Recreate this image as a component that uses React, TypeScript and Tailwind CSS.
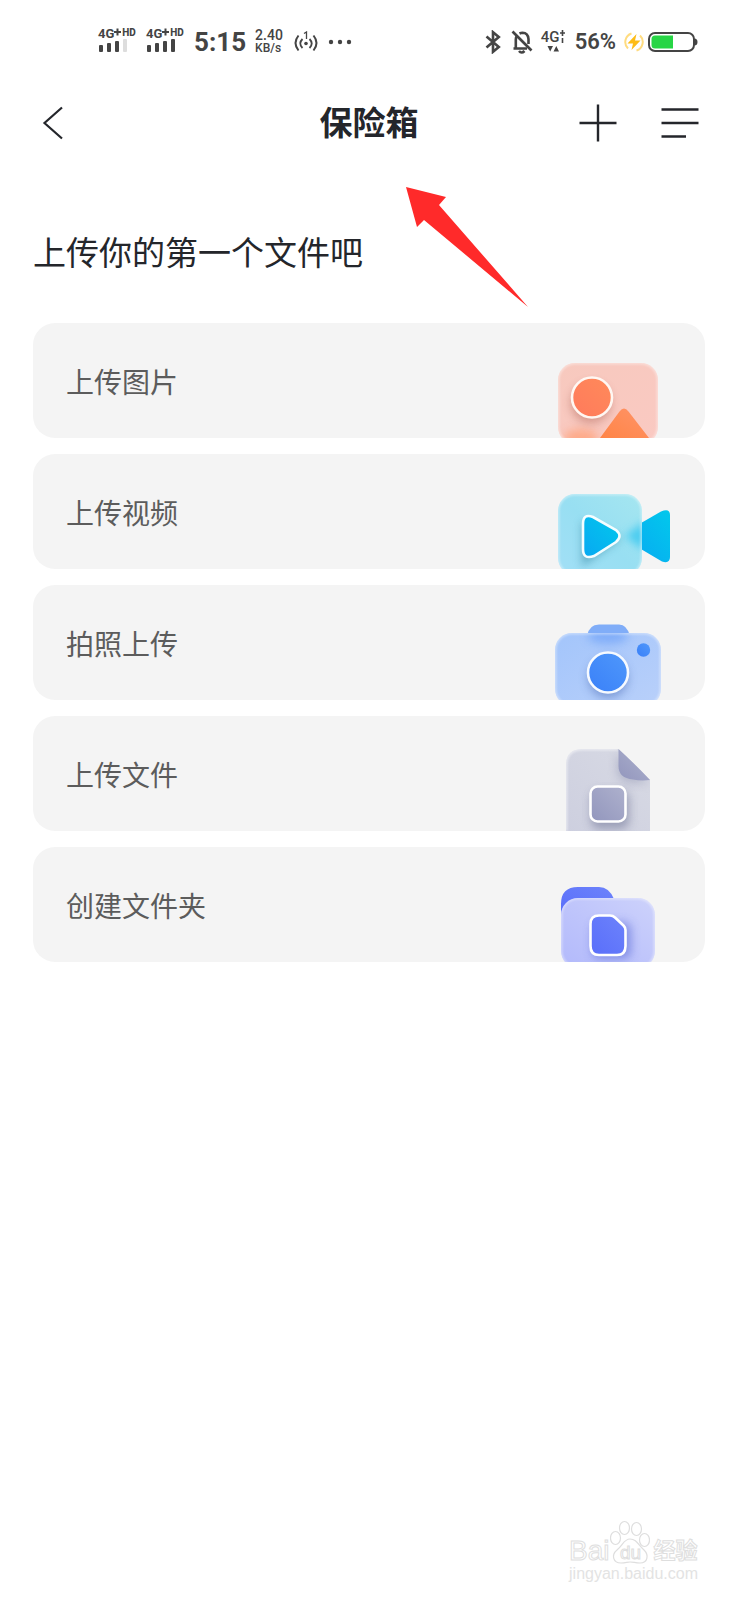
import React from 'react';

interface UploadAction {
  label: string;
  icon: React.FC;
}

const SignalBars: React.FC<{ level: number }> = ({ level }) => {
  const heights = [7, 9, 11, 13];
  return (
    <div className="w-[39px] pb-1.5">
      <div className="flex h-3 items-start leading-none font-bold">
        <span className="text-[13px] leading-[13px]">4G</span>
        <svg className="h-[11px] w-[7px] shrink-0" viewBox="0 0 7 11" aria-hidden="true">
          <path d="M3.500 1.500v7M0 5h7" stroke="currentColor" strokeWidth="2" />
        </svg>
        <span className="pl-px text-[10px] leading-[11px] font-extrabold">HD</span>
      </div>
      <svg className="h-[13px] w-[30px]" viewBox="0 0 30 13" aria-hidden="true">
        {heights.map((h, i) => (
          <rect
            key={h}
            x={1 + i * 8}
            y={13 - h}
            width="4"
            height={h}
            rx="1"
            fill={i < level ? '#444444' : '#dddddd'}
          />
        ))}
      </svg>
    </div>
  );
};

const StatusBar: React.FC = () => (
  <div className="flex h-[84px] items-center justify-between pr-10 pl-[98px] font-['Roboto',sans-serif] text-[#444444]">
    <div className="flex items-center gap-[9px]">
      <SignalBars level={3} />
      <SignalBars level={4} />
      <span className="text-[26px] leading-none font-bold">5:15</span>
      <div className="text-[14px] leading-[13px] font-medium">
        <div>2.40</div>
        <div className="text-[12px]">KB/s</div>
      </div>
      <svg className="ml-0.5 h-[22px] w-[24px]" viewBox="0 0 24 22" fill="none" stroke="currentColor" aria-hidden="true">
        <path d="M4.500 4.500Q-1.500 12 4.500 19.500M19.500 4.500Q25.500 12 19.500 19.500" strokeWidth="2" />
        <path d="M8.500 8Q4 12.500 8.500 17M15.500 8Q20 12.500 15.500 17" strokeWidth="1.800" />
        <path d="M10 2.500L12.500 1V8" strokeWidth="1.300" />
        <circle cx="12" cy="12.500" r="1.800" fill="currentColor" stroke="none" />
      </svg>
      <svg className="h-[6px] w-[26px]" viewBox="0 0 26 6" fill="currentColor" aria-hidden="true">
        <circle cx="4" cy="3" r="2.200" />
        <circle cx="13" cy="3" r="2.200" />
        <circle cx="22" cy="3" r="2.200" />
      </svg>
    </div>

    <div className="flex items-center gap-2">
      <svg className="mr-0.5 h-6 w-4" viewBox="0 0 16 24" fill="none" stroke="currentColor" strokeWidth="2.600" aria-hidden="true">
        <path d="M1.500 6.500L13.800 17 8 21.800V2.200L13.800 7 1.500 17.500" />
      </svg>
      <svg className="h-6 w-[22px]" viewBox="0 0 22 24" fill="none" stroke="currentColor" strokeWidth="2.600" aria-hidden="true">
        <path d="M2.500 18.500H16M4.800 18.500V9.500Q4.800 7.500 5.800 6M8.500 3.500Q10 2.800 11.500 2.800 17 3 17.500 9V14" />
        <path d="M1.500 1.500L20.500 20.500" />
        <path d="M8 21Q10.500 24 13.500 21" />
      </svg>
      <div className="w-[26px] pb-0.5">
        <div className="flex h-[15px] items-start">
          <span className="text-[15px] leading-[15px] font-medium">4G</span>
          <svg className="h-[14px] w-[6px] shrink-0" viewBox="0 0 6 14" fill="none" stroke="currentColor" strokeWidth="1.600" aria-hidden="true">
            <path d="M3.500 0V6M1 3H6M3.500 8V13" />
          </svg>
        </div>
        <svg className="ml-[6px] h-[7px] w-[13px]" viewBox="0 0 13 7" fill="currentColor" aria-hidden="true">
          <path d="M.500 1H6L3.200 6.500ZM6.500 6.500H12L9.300 1Z" />
        </svg>
      </div>
      <span className="text-[22px] leading-none font-semibold">56%</span>
      <svg className="h-5 w-5" viewBox="0 0 20 20" fill="none" aria-hidden="true">
        <path d="M7.500 1.500A9 9 0 0 0 4 16.500M12.500 18.500A9 9 0 0 0 16 3.500" stroke="#ffdc80" strokeWidth="2" />
        <path d="M12.500 2L3.500 11.500H9L7.500 18 16.500 8.500H11Z" fill="#fdbc16" />
      </svg>
      <svg className="-ml-1 h-5 w-[50px]" viewBox="0 0 50 20" fill="none" aria-hidden="true">
        <rect x="1" y="1" width="45" height="18" rx="6" stroke="#444444" strokeWidth="2" />
        <path d="M7 3.500H25V16.500H7Q3.500 16.500 3.500 13V7Q3.500 3.500 7 3.500Z" fill="#27d545" />
        <path d="M47 6.500Q49.500 7 49.500 10T47 13.500Z" fill="#444444" />
      </svg>
    </div>
  </div>
);

const ImageIcon: React.FC = () => (
  <svg className="h-[88px] w-32" viewBox="0 0 128 88" fill="none" aria-hidden="true">
    <defs>
      <linearGradient id="img-body" x1="0" y1="0" x2="1" y2="1">
        <stop stopColor="#f7c9be" />
        <stop offset="1" stopColor="#fac9c2" />
      </linearGradient>
      <linearGradient id="img-sun" x1="1" y1="0" x2="0" y2="1">
        <stop stopColor="#ff8a5a" />
        <stop offset="1" stopColor="#ff7a5c" />
      </linearGradient>
      <linearGradient id="img-hill" x1="0" y1="1" x2="1" y2="0">
        <stop stopColor="#ff8446" />
        <stop offset="1" stopColor="#ff9468" />
      </linearGradient>
      <clipPath id="img-clip">
        <rect x="13" y="13" width="100" height="81" rx="17" />
      </clipPath>
      <filter id="img-blur" x="-50%" y="-50%" width="200%" height="200%">
        <feGaussianBlur stdDeviation="5" />
      </filter>
      <filter id="img-edge">
        <feGaussianBlur stdDeviation="1" />
      </filter>
    </defs>
    <g clipPath="url(#img-clip)">
      <rect x="13" y="13" width="100" height="81" fill="url(#img-body)" />
      <ellipse cx="36" cy="88" rx="17" ry="9" fill="#ffa27a" opacity=".8" filter="url(#img-blur)" />
      <circle cx="46" cy="53" r="20" fill="#a85a4c" opacity=".45" filter="url(#img-blur)" />
      <rect x="13" y="13" width="100" height="81" rx="17" stroke="#ffffff" strokeWidth="3" opacity=".4" filter="url(#img-edge)" />
    </g>
    <path d="M55 88L74.500 61.500Q79 55.500 83.500 61.500L104 88Z" fill="url(#img-hill)" />
    <circle cx="47" cy="47.500" r="20" fill="url(#img-sun)" stroke="#fff7f2" strokeWidth="2.600" />
  </svg>
);

const VideoIcon: React.FC = () => (
  <svg className="h-[88px] w-32" viewBox="0 0 128 88" fill="none" aria-hidden="true">
    <defs>
      <linearGradient id="vid-body" x1="1" y1="0" x2="0" y2="1">
        <stop stopColor="#a5e6f0" />
        <stop offset=".5" stopColor="#98dff2" />
        <stop offset="1" stopColor="#a2dff6" />
      </linearGradient>
      <linearGradient id="vid-play" x1="1" y1="0" x2="0" y2="1">
        <stop stopColor="#02c8ec" />
        <stop offset="1" stopColor="#08a8f2" />
      </linearGradient>
      <clipPath id="vid-clip">
        <rect x="13" y="13" width="84" height="81" rx="17" />
      </clipPath>
      <filter id="vid-blur" x="-50%" y="-50%" width="200%" height="200%">
        <feGaussianBlur stdDeviation="4" />
      </filter>
      <filter id="vid-edge">
        <feGaussianBlur stdDeviation="1" />
      </filter>
    </defs>
    <path d="M84 49L116 30.500Q125 27 125 34V76Q125 83 117 80.500L84 61Z" fill="url(#vid-play)" />
    <g clipPath="url(#vid-clip)">
      <rect x="13" y="13" width="84" height="81" fill="url(#vid-body)" />
      <path d="M80 55L100 40V70Z" fill="#4accf0" filter="url(#vid-blur)" />
      <path d="M40 45L70 58 40 80Z" fill="#2c7f9b" stroke="#2c7f9b" strokeWidth="6" opacity=".5" filter="url(#vid-blur)" />
      <rect x="13" y="13" width="84" height="81" rx="17" stroke="#ffffff" strokeWidth="3" opacity=".4" filter="url(#vid-edge)" />
    </g>
    <path
      d="M38 43Q38 32 48 36L71 49Q78 55 71 61L49 75Q38 79 38 68Z"
      fill="url(#vid-play)"
      stroke="#f4fdff"
      strokeWidth="2.600"
    />
  </svg>
);

const CameraIcon: React.FC = () => (
  <svg className="h-[88px] w-32" viewBox="0 0 128 88" fill="none" aria-hidden="true">
    <defs>
      <linearGradient id="cam-body" x1="0" y1="0" x2="1" y2="1">
        <stop stopColor="#a3c5fb" />
        <stop offset="1" stopColor="#b9d0fa" />
      </linearGradient>
      <linearGradient id="cam-lens" x1="1" y1="0" x2="0" y2="1">
        <stop stopColor="#4f98fb" />
        <stop offset="1" stopColor="#3a80f8" />
      </linearGradient>
      <clipPath id="cam-clip">
        <rect x="10" y="21" width="106" height="73" rx="17" />
      </clipPath>
      <filter id="cam-blur" x="-50%" y="-50%" width="200%" height="200%">
        <feGaussianBlur stdDeviation="5" />
      </filter>
      <filter id="cam-edge">
        <feGaussianBlur stdDeviation="1" />
      </filter>
    </defs>
    <path d="M42 24Q44 12.500 54 12.500H74Q82 12.500 85 24Z" fill="#80adf8" />
    <g clipPath="url(#cam-clip)">
      <rect x="10" y="21" width="106" height="73" fill="url(#cam-body)" />
      <ellipse cx="63" cy="24" rx="20" ry="8" fill="#6fa2f8" opacity=".7" filter="url(#cam-blur)" />
      <circle cx="63" cy="66" r="20" fill="#4a6bb4" opacity=".5" filter="url(#cam-blur)" />
      <rect x="10" y="21" width="106" height="73" rx="17" stroke="#ffffff" strokeWidth="3" opacity=".4" filter="url(#cam-edge)" />
    </g>
    <circle cx="63" cy="60.500" r="20" fill="url(#cam-lens)" stroke="#f6faff" strokeWidth="2.600" />
    <circle cx="98.500" cy="38" r="6.700" fill="url(#cam-lens)" />
  </svg>
);

const FileIcon: React.FC = () => (
  <svg className="h-[88px] w-32" viewBox="0 0 128 88" fill="none" aria-hidden="true">
    <defs>
      <linearGradient id="file-body" x1="1" y1="0" x2="0" y2="1">
        <stop stopColor="#d8dae4" />
        <stop offset="1" stopColor="#cdcfdf" />
      </linearGradient>
      <linearGradient id="file-mark" x1="1" y1="0" x2="0" y2="1">
        <stop stopColor="#aeb1cd" />
        <stop offset="1" stopColor="#9296bd" />
      </linearGradient>
      <clipPath id="file-clip">
        <path d="M21 22Q21 6 38 6H73.500L105 37V88H21Z" />
      </clipPath>
      <filter id="file-blur" x="-50%" y="-50%" width="200%" height="200%">
        <feGaussianBlur stdDeviation="5" />
      </filter>
      <filter id="file-edge">
        <feGaussianBlur stdDeviation="1" />
      </filter>
    </defs>
    <g clipPath="url(#file-clip)">
      <rect x="21" y="6" width="84" height="82" fill="url(#file-body)" />
      <path d="M72 10V28Q74 40 86 40H104Z" fill="#9296b4" opacity=".5" filter="url(#file-blur)" />
      <rect x="46" y="48" width="38" height="38" rx="8" fill="#777b9b" opacity=".6" filter="url(#file-blur)" />
      <path d="M21 88V22Q21 6 38 6H73" stroke="#ffffff" strokeWidth="3" opacity=".5" filter="url(#file-edge)" />
    </g>
    <path d="M73.500 6Q90 21 105 37 96 38 88 36.500 73.500 35 73.500 23Z" fill="url(#file-mark)" />
    <rect x="45.500" y="43.500" width="35" height="35" rx="7" fill="url(#file-mark)" stroke="#ffffff" strokeWidth="2.600" />
  </svg>
);

const FolderIcon: React.FC = () => (
  <svg className="h-[88px] w-32" viewBox="0 0 128 88" fill="none" aria-hidden="true">
    <defs>
      <linearGradient id="dir-body" x1="1" y1="0" x2="0" y2="1">
        <stop stopColor="#cdd2fb" />
        <stop offset=".5" stopColor="#bfc5fb" />
        <stop offset="1" stopColor="#b2b9fb" />
      </linearGradient>
      <linearGradient id="dir-mark" x1="1" y1="0" x2="0" y2="1">
        <stop stopColor="#6d83fb" />
        <stop offset="1" stopColor="#596efa" />
      </linearGradient>
      <clipPath id="dir-clip">
        <rect x="16" y="24" width="94" height="70" rx="17" />
      </clipPath>
      <filter id="dir-blur" x="-50%" y="-50%" width="200%" height="200%">
        <feGaussianBlur stdDeviation="5" />
      </filter>
      <filter id="dir-edge">
        <feGaussianBlur stdDeviation="1" />
      </filter>
    </defs>
    <path d="M16 42V30Q16 13 33 13H54Q64 13 69 25L40 34Z" fill="url(#dir-mark)" />
    <g clipPath="url(#dir-clip)">
      <rect x="16" y="24" width="94" height="70" fill="url(#dir-body)" />
      <rect x="47" y="48" width="39" height="37" rx="8" fill="#4a5cd0" opacity=".5" filter="url(#dir-blur)" />
      <rect x="16" y="24" width="94" height="70" rx="17" stroke="#ffffff" strokeWidth="3" opacity=".4" filter="url(#dir-edge)" />
    </g>
    <path
      d="M54 41.500H65Q68 41.500 70 43.500L78.500 51.500Q80.500 53.500 80.500 56V72Q80.500 81 72 81H54Q45.500 81 45.500 72V50Q45.500 41.500 54 41.500Z"
      fill="url(#dir-mark)"
      stroke="#ffffff"
      strokeWidth="2.600"
    />
  </svg>
);

const actions: UploadAction[] = [
  { label: '上传图片', icon: ImageIcon },
  { label: '上传视频', icon: VideoIcon },
  { label: '拍照上传', icon: CameraIcon },
  { label: '上传文件', icon: FileIcon },
  { label: '创建文件夹', icon: FolderIcon }
];

const Header: React.FC = () => (
  <header className="grid h-[78px] grid-cols-[1fr_auto_1fr] items-center px-[38px]">
    <button type="button" aria-label="返回" className="size-10">
      <svg className="size-10" viewBox="0 0 40 40" fill="none" stroke="#24262b" strokeWidth="2.200">
        <path d="M24 4.500L6.500 20L24 35.500" />
      </svg>
    </button>
    <h1 className="pb-1 text-[33px] leading-10 font-bold">保险箱</h1>
    <div className="flex justify-end gap-[42px]">
      <button type="button" aria-label="新建">
        <svg className="size-10" viewBox="0 0 40 40" fill="none" stroke="#24262b" strokeWidth="2.400">
          <path d="M1.500 20H38.500M20 1.500V38.500" />
        </svg>
      </button>
      <button type="button" aria-label="菜单">
        <svg className="size-10" viewBox="0 0 40 40" fill="none" stroke="#24262b" strokeWidth="2.400">
          <path d="M1.500 6.500H38.500M1.500 20H38.500M1.500 33.500H26" />
        </svg>
      </button>
    </div>
  </header>
);

const Watermark: React.FC = () => (
  <footer className="mt-auto self-end pr-10 pb-4 font-['Liberation_Sans','Noto_Sans_CJK_SC',sans-serif]">
    <div className="flex h-12 items-end text-white [-webkit-text-stroke:1px_#dedede]">
      <span className="text-[28px] leading-[26px]">Bai</span>
      <svg className="h-[46px] w-[40px]" viewBox="0 0 40 46" fill="none" stroke="#dedede" strokeWidth="1.200" aria-hidden="true">
        <ellipse cx="5.500" cy="20" rx="5" ry="6.500" />
        <ellipse cx="14.500" cy="10" rx="5" ry="6.500" />
        <ellipse cx="26.500" cy="11" rx="5" ry="6.500" />
        <ellipse cx="34.500" cy="22" rx="5" ry="6.500" />
        <path d="M20 21C14 21 13 27 7 32C1 37 3 45 11 45C16 45 17 44 20 44C24 44 25 45 30 45C38 45 39 37 34 32C28 27 27 21 20 21Z" />
        <text x="10" y="41" fontSize="19" fill="#ffffff" strokeWidth="1">du</text>
      </svg>
      <span className="pl-1 text-[22px] leading-[26px] font-bold">经验</span>
    </div>
    <div className="text-[16px] leading-5 text-[#e3e3e3]">jingyan.baidu.com</div>
  </footer>
);

const App: React.FC = () => {
  return (
    <div
      lang="zh-CN"
      className="relative flex min-h-screen flex-col bg-white font-['Noto_Sans_CJK_SC',sans-serif] text-[#24262b]"
    >
      <StatusBar />
      <Header />

      {/* 指向标题的红色箭头 */}
      <svg
        className="pointer-events-none absolute top-[187px] left-[55%] h-[120px] w-[122px]"
        viewBox="0 0 122 120"
        fill="#ff2a2a"
        aria-hidden="true"
      >
        <path d="M0 0L40 10L33 18L122 120L18 33L11 40Z" />
      </svg>

      <main className="px-[33px] pt-[65px]">
        <h2 className="text-[33px] leading-12">上传你的第一个文件吧</h2>
        <ul className="mt-12 flex flex-col gap-4">
          {actions.map(({ label, icon: Icon }) => (
            <li key={label}>
              <button
                type="button"
                className="flex h-[115px] w-full items-center justify-between overflow-hidden rounded-[22px] bg-[#f4f4f4] pr-8 pl-[33px] text-left"
              >
                <span className="text-[28px] leading-10 text-[#5c5c5c]">{label}</span>
                <span className="self-end">
                  <Icon />
                </span>
              </button>
            </li>
          ))}
        </ul>
      </main>

      <Watermark />
    </div>
  );
};

export default App;
